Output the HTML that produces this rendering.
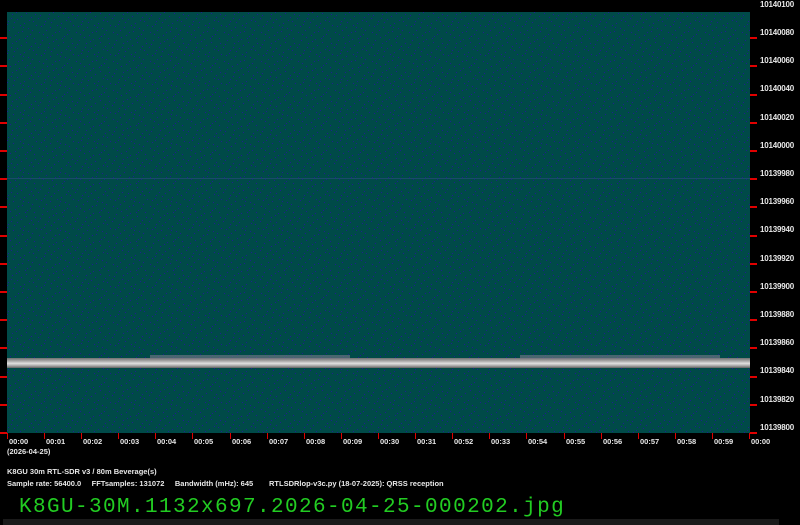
<!DOCTYPE html>
<html><head><meta charset="utf-8"><style>
body{margin:0;width:800px;height:525px;background:#000;position:relative;overflow:hidden;font-family:"Liberation Sans",sans-serif}
.a{position:absolute}
.yl{position:absolute;left:760px;color:#e8e8e8;font-size:8px;font-weight:bold;letter-spacing:-0.2px}
.xl{position:absolute;top:437px;color:#e8e8e8;font-size:7.5px;font-weight:bold}
.t{position:absolute;color:#e8e8e8;font-size:7.5px;font-weight:bold}
</style></head><body>
<svg class="a" style="left:0;top:0" width="800" height="525">
<defs>
<pattern id="n" width="37" height="29" patternUnits="userSpaceOnUse">
<rect width="37" height="29" fill="#004a48"/>
<g fill="#1e1e90">
<rect x="2" y="3" width="1" height="1"/><rect x="9" y="1" width="1" height="1"/><rect x="15" y="6" width="1" height="1"/><rect x="22" y="2" width="1" height="1"/><rect x="30" y="5" width="1" height="1"/><rect x="34" y="9" width="1" height="1"/><rect x="5" y="11" width="1" height="1"/><rect x="12" y="14" width="1" height="1"/><rect x="19" y="10" width="1" height="1"/><rect x="26" y="13" width="1" height="1"/><rect x="1" y="18" width="1" height="1"/><rect x="8" y="21" width="1" height="1"/><rect x="17" y="19" width="1" height="1"/><rect x="24" y="23" width="1" height="1"/><rect x="31" y="17" width="1" height="1"/><rect x="36" y="25" width="1" height="1"/><rect x="4" y="26" width="1" height="1"/><rect x="13" y="27" width="1" height="1"/><rect x="20" y="25" width="1" height="1"/><rect x="28" y="28" width="1" height="1"/><rect x="33" y="21" width="1" height="1"/><rect x="10" y="8" width="1" height="1"/><rect x="27" y="7" width="1" height="1"/><rect x="14" y="22" width="1" height="1"/>
<rect x="6" y="5" width="1" height="1"/><rect x="18" y="3" width="1" height="1"/><rect x="25" y="9" width="1" height="1"/><rect x="32" y="1" width="1" height="1"/><rect x="3" y="15" width="1" height="1"/><rect x="21" y="16" width="1" height="1"/><rect x="35" y="14" width="1" height="1"/><rect x="11" y="18" width="1" height="1"/><rect x="29" y="20" width="1" height="1"/><rect x="7" y="24" width="1" height="1"/><rect x="23" y="27" width="1" height="1"/><rect x="16" y="12" width="1" height="1"/>
</g></pattern>
<linearGradient id="b" x1="0" y1="0" x2="0" y2="1">
<stop offset="0" stop-color="#707070"/><stop offset="0.3" stop-color="#a8a8a8"/><stop offset="0.55" stop-color="#e0e0e0"/><stop offset="0.8" stop-color="#a0a0a0"/><stop offset="1" stop-color="#606060"/>
</linearGradient>
</defs>
<rect x="7" y="12" width="743" height="421" fill="url(#n)"/>
<rect x="7" y="178" width="743" height="1" fill="#1a4a6a"/>
<rect x="7" y="358" width="743" height="10" fill="url(#b)"/>
<rect x="150" y="355" width="200" height="4" fill="#7a7a8a" opacity="0.6"/>
<rect x="520" y="355" width="200" height="4" fill="#7a7a8a" opacity="0.6"/>
</svg>
<svg class="a" style="left:0;top:0" width="800" height="525">
<g fill="#e00000">
<rect x="750" y="37" width="7" height="2"/><rect x="750" y="65" width="7" height="2"/><rect x="750" y="94" width="7" height="2"/><rect x="750" y="122" width="7" height="2"/><rect x="750" y="150" width="7" height="2"/><rect x="750" y="178" width="7" height="2"/><rect x="750" y="206" width="7" height="2"/><rect x="750" y="235" width="7" height="2"/><rect x="750" y="263" width="7" height="2"/><rect x="750" y="291" width="7" height="2"/><rect x="750" y="319" width="7" height="2"/><rect x="750" y="347" width="7" height="2"/><rect x="750" y="376" width="7" height="2"/><rect x="750" y="404" width="7" height="2"/><rect x="750" y="432" width="7" height="2"/>
<rect x="0" y="37" width="7" height="2"/><rect x="0" y="65" width="7" height="2"/><rect x="0" y="94" width="7" height="2"/><rect x="0" y="122" width="7" height="2"/><rect x="0" y="150" width="7" height="2"/><rect x="0" y="178" width="7" height="2"/><rect x="0" y="206" width="7" height="2"/><rect x="0" y="235" width="7" height="2"/><rect x="0" y="263" width="7" height="2"/><rect x="0" y="291" width="7" height="2"/><rect x="0" y="319" width="7" height="2"/><rect x="0" y="347" width="7" height="2"/><rect x="0" y="376" width="7" height="2"/><rect x="0" y="404" width="7" height="2"/><rect x="0" y="432" width="7" height="2"/>
</g>
<g fill="#e00000">
<rect x="7" y="433" width="1" height="6"/><rect x="44" y="433" width="1" height="6"/><rect x="81" y="433" width="1" height="6"/><rect x="118" y="433" width="1" height="6"/><rect x="155" y="433" width="1" height="6"/><rect x="192" y="433" width="1" height="6"/><rect x="230" y="433" width="1" height="6"/><rect x="267" y="433" width="1" height="6"/><rect x="304" y="433" width="1" height="6"/><rect x="341" y="433" width="1" height="6"/><rect x="378" y="433" width="1" height="6"/><rect x="415" y="433" width="1" height="6"/><rect x="452" y="433" width="1" height="6"/><rect x="489" y="433" width="1" height="6"/><rect x="526" y="433" width="1" height="6"/><rect x="564" y="433" width="1" height="6"/><rect x="601" y="433" width="1" height="6"/><rect x="638" y="433" width="1" height="6"/><rect x="675" y="433" width="1" height="6"/><rect x="712" y="433" width="1" height="6"/><rect x="749" y="433" width="1" height="6"/>
</g>
<rect x="3" y="519" width="776" height="6" fill="#1a1a1a"/>
</svg>
<div class="yl" style="top:0px">10140100</div><div class="yl" style="top:28px">10140080</div><div class="yl" style="top:56px">10140060</div><div class="yl" style="top:84px">10140040</div><div class="yl" style="top:113px">10140020</div><div class="yl" style="top:141px">10140000</div><div class="yl" style="top:169px">10139980</div><div class="yl" style="top:197px">10139960</div><div class="yl" style="top:225px">10139940</div><div class="yl" style="top:254px">10139920</div><div class="yl" style="top:282px">10139900</div><div class="yl" style="top:310px">10139880</div><div class="yl" style="top:338px">10139860</div><div class="yl" style="top:366px">10139840</div><div class="yl" style="top:395px">10139820</div><div class="yl" style="top:423px">10139800</div>
<div class="xl" style="left:9px">00:00</div><div class="xl" style="left:46px">00:01</div><div class="xl" style="left:83px">00:02</div><div class="xl" style="left:120px">00:03</div><div class="xl" style="left:157px">00:04</div><div class="xl" style="left:194px">00:05</div><div class="xl" style="left:232px">00:06</div><div class="xl" style="left:269px">00:07</div><div class="xl" style="left:306px">00:08</div><div class="xl" style="left:343px">00:09</div><div class="xl" style="left:380px">00:30</div><div class="xl" style="left:417px">00:31</div><div class="xl" style="left:454px">00:52</div><div class="xl" style="left:491px">00:33</div><div class="xl" style="left:528px">00:54</div><div class="xl" style="left:566px">00:55</div><div class="xl" style="left:603px">00:56</div><div class="xl" style="left:640px">00:57</div><div class="xl" style="left:677px">00:58</div><div class="xl" style="left:714px">00:59</div><div class="xl" style="left:751px">00:00</div>
<div class="t" style="left:7px;top:447px">(2026-04-25)</div>
<div class="t" style="left:7px;top:467px">K8GU 30m RTL-SDR v3 / 80m Beverage(s)</div>
<div class="t" style="left:7px;top:479px;white-space:pre">Sample rate: 56400.0     FFTsamples: 131072     Bandwidth (mHz): 645</div>
<div class="t" style="left:269px;top:479px">RTLSDRlop-v3c.py (18-07-2025): QRSS reception</div>
<div class="a" style="left:19px;top:496px;color:#22cc22;font-family:'Liberation Mono',monospace;font-size:21px;letter-spacing:1.4px;line-height:24px">K8GU-30M.1132x697.2026-04-25-000202.jpg</div>
</body></html>
